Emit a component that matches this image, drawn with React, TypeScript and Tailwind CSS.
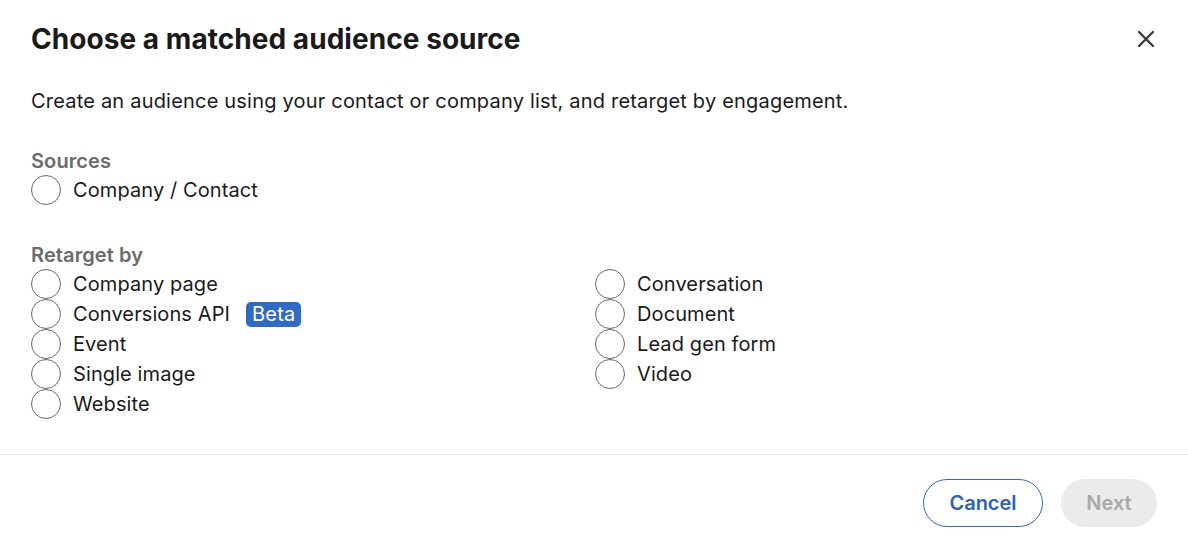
const left = ['Company page', 'Conversions API', 'Event', 'Single image', 'Website']
const right = ['Conversation', 'Document', 'Lead gen form', 'Video']

function Radio({ label, beta }: { label: string; beta?: boolean }) {
  return (
    <label className="flex items-center h-[30px] cursor-pointer">
      <span className="w-[30px] h-[30px] rounded-full border-[1.5px] border-[#6b6b6b] bg-white shrink-0" />
      <span className="ml-[12px] text-[20px] leading-[28px] tracking-[0.1px] text-[#1a1a1a]">{label}</span>
      {beta && (
        <span className="ml-[16px] rounded-[5px] bg-[#2f6bc6] px-[6px] text-[20px] leading-[25px] tracking-[0.2px] text-white">
          Beta
        </span>
      )}
    </label>
  )
}

export default function App() {
  return (
    <div className="w-[1188px] h-[544px] bg-white font-['Inter','Liberation_Sans',sans-serif] overflow-hidden">
      <div className="px-[31px] pt-[21px]">
        <div className="flex items-center justify-between">
          <h1 className="text-[28px] leading-[36px] font-bold text-[#1a1a1a] tracking-[0.05px]">
            Choose a matched audience source
          </h1>
          <button className="mr-[-5px] w-[32px] h-[32px] flex items-center justify-center" aria-label="Close">
            <svg width="18" height="18" viewBox="0 0 18 18">
              <path d="M2 2 L16 16 M16 2 L2 16" stroke="#3d3d3d" strokeWidth="2.4" strokeLinecap="round" />
            </svg>
          </button>
        </div>
        <p className="mt-[30px] text-[20px] leading-[28px] tracking-[0.2px] text-[#1a1a1a]">
          Create an audience using your contact or company list, and retarget by engagement.
        </p>
        <p className="mt-[32px] text-[20px] leading-[28px] font-semibold tracking-[0.1px] text-[#6b6b6b]">Sources</p>
        <Radio label="Company / Contact" />
        <p className="mt-[36px] text-[20px] leading-[28px] font-semibold tracking-[0.1px] text-[#6b6b6b]">Retarget by</p>
        <div className="grid grid-cols-[564px_1fr]">
          <div className="flex flex-col">
            {left.map((l) => (
              <Radio key={l} label={l} beta={l === 'Conversions API'} />
            ))}
          </div>
          <div className="flex flex-col">
            {right.map((l) => (
              <Radio key={l} label={l} />
            ))}
          </div>
        </div>
      </div>
      <div className="mt-[35px] border-t border-[#e8e8e8] flex justify-end gap-[18px] px-[31px] pt-[24px]">
        <button className="h-[48px] w-[120px] rounded-full border border-[#2f6bc6] text-[20px] font-semibold text-[#2a62bc]">
          Cancel
        </button>
        <button className="h-[48px] w-[96px] rounded-full bg-[#ebebeb] text-[20px] font-semibold text-[#a8a8a8]">
          Next
        </button>
      </div>
    </div>
  )
}
